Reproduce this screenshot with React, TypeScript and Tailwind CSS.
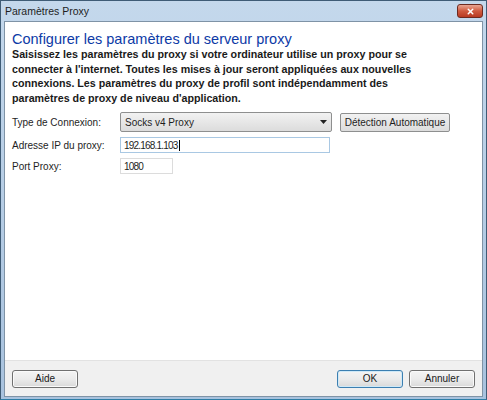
import { X } from "lucide-react";

const font = { fontFamily: '"Liberation Sans", Arial, sans-serif' };

function WinButton({ label, primary, className = "" }: { label: string; primary?: boolean; className?: string }) {
  return (
    <button
      className={`h-[18px] w-[66px] rounded-[3px] border text-[10px] text-[#1a1a1a] bg-gradient-to-b from-[#f4f4f4] via-[#ebebeb] to-[#d9d9d9] ${
        primary ? "border-[#3c7fb1] shadow-[inset_0_0_0_1px_#cfe9f7]" : "border-[#707070] shadow-[inset_0_0_0_1px_#fafafa]"
      } ${className}`}
    >
      {label}
    </button>
  );
}

export default function App() {
  return (
    <div className="w-[487px] h-[400px] bg-[#a8c3de]" style={font}>
      <div className="w-full h-full flex flex-col border border-[#3f5c76] border-b-[#2f7ea6] bg-gradient-to-b from-[#c4d8ec] to-[#a8c2de]">
        {/* Title bar */}
        <div className="h-[20px] flex items-center justify-between pl-[4px] pr-[3px]">
          <span className="text-[10.5px] text-[#1e1e1e] leading-none">Paramètres Proxy</span>
          <div className="w-[26px] h-[14px] rounded-[3px] border border-[#6d2a20] bg-gradient-to-b from-[#e8a593] via-[#cf5a3f] to-[#b83a22] flex items-center justify-center">
            <X className="w-[9px] h-[9px] text-white" strokeWidth={4} />
          </div>
        </div>

        {/* Body */}
        <div className="flex-1 mx-[3px] mb-[2px] flex flex-col border border-[#7f93a6] bg-white">
          <div className="flex-1 px-[7px] pt-[9px]">
            <h1 className="text-[14.5px] leading-[16px] text-[#0d3aa6]">Configurer les paramètres du serveur proxy</h1>
            <p className="text-[10.7px] leading-[14.5px] font-bold text-[#1a1a1a] whitespace-nowrap">
              Saisissez les paramètres du proxy si votre ordinateur utilise un proxy pour se
              <br />
              connecter à l'internet. Toutes les mises à jour seront appliquées aux nouvelles
              <br />
              connexions. Les paramètres du proxy de profil sont indépendamment des
              <br />
              paramètres de proxy de niveau d'application.
            </p>

            <div className="mt-[7px] grid grid-cols-[108px_auto] gap-y-[5px] items-center text-[10px] text-[#1e1e1e]">
              <span>Type de Connexion:</span>
              <div className="flex items-center gap-[8px]">
                <div className="w-[212px] h-[20px] rounded-[2px] border border-[#8e8f8f] bg-gradient-to-b from-[#f2f2f2] to-[#dcdcdc] flex items-center justify-between pl-[4px] pr-[4px]">
                  <span>Socks v4 Proxy</span>
                  <svg width="7" height="4" viewBox="0 0 7 4"><path d="M0 0h7L3.5 4z" fill="#222" /></svg>
                </div>
                <button className="h-[19px] w-[110px] rounded-[2px] border border-[#8e8f8f] bg-gradient-to-b from-[#f2f2f2] to-[#dcdcdc] text-[10px]">
                  Détection Automatique
                </button>
              </div>

              <span>Adresse IP du proxy:</span>
              <div className="w-[210px] h-[16px] border border-[#a9c8e3] flex items-center pl-[3px] text-[10px] tracking-[-0.8px]">
                192.168.1.103<span className="ml-[1px] w-px h-[11px] bg-black" />
              </div>

              <span>Port Proxy:</span>
              <div className="w-[53px] h-[16px] border border-[#dcdcdc] flex items-center pl-[3px] text-[10px] tracking-[-0.8px]">1080</div>
            </div>
          </div>

          {/* Footer */}
          <div className="h-[36px] bg-[#f0f0f0] border-t border-[#e2e2e2] flex items-center px-[7px]">
            <WinButton label="Aide" />
            <div className="flex-1" />
            <WinButton label="OK" primary />
            <WinButton label="Annuler" className="ml-[6px]" />
          </div>
        </div>
      </div>
    </div>
  );
}
